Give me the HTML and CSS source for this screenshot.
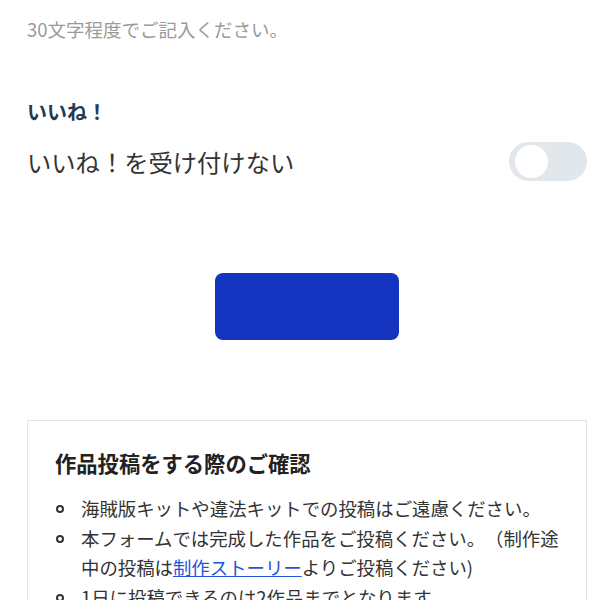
FILE: index.html
```html
<!DOCTYPE html>
<html>
<head>
  <meta charset="utf-8">
  <title>作品投稿</title>
  <link rel="stylesheet" href="styles.css">
</head>
<body>
  <div class="page">
    <p class="hint">30文字程度でご記入ください。</p>

    <div class="field">
      <h3 class="field-label">いいね！</h3>
      <div class="toggle-row">
        <span class="toggle-text">いいね！を受け付けない</span>
        <span class="toggle"><span class="knob"></span></span>
      </div>
    </div>

    <div class="submit-wrap">
      <button class="submit" type="button"></button>
    </div>

    <div class="notice">
      <h2 class="notice-title">作品投稿をする際のご確認</h2>
      <ul class="notice-list">
        <li>海賊版キットや違法キットでの投稿はご遠慮ください。</li>
        <li>本フォームでは完成した作品をご投稿ください。（制作途中の投稿は<a href="#">制作ストーリー</a>よりご投稿ください)</li>
        <li>1日に投稿できるのは2作品までとなります。</li>
        <li>投稿された作品は運営が確認のうえ公開されます。</li>
      </ul>
    </div>
  </div>
</body>
</html>
```

FILE: styles.css
```css
body {
  margin: 0;
  font-family: "Noto Sans CJK JP", "Noto Sans", sans-serif;
  color: #333;
  background: #fff;
  text-spacing-trim: space-all;
}

.page {
  padding: 0 13px 40px 27px;
}

.hint {
  margin: 0;
  padding-top: 16px;
  font-size: 18.5px;
  line-height: 26px;
  color: #9a9a9a;
}

.field {
  margin-top: 57px;
}

.field-label {
  margin: 0;
  font-size: 20px;
  line-height: 26px;
  font-weight: bold;
  color: #243b53;
}

.toggle-row {
  display: flex;
  align-items: center;
  justify-content: space-between;
  margin-top: 17px;
}

.toggle-text {
  font-size: 24.3px;
  line-height: 39px;
  color: #333;
}

.toggle {
  display: flex;
  align-items: center;
  width: 78px;
  height: 39px;
  padding: 0 6px;
  box-sizing: border-box;
  border-radius: 20px;
  background: #e2e7ec;
}

.knob {
  width: 33px;
  height: 33px;
  border-radius: 50%;
  background: #fff;
}

.submit-wrap {
  display: flex;
  justify-content: center;
  margin-top: 92px;
}

.submit {
  width: 184px;
  height: 67px;
  border: none;
  border-radius: 8px;
  background: #1434c0;
  cursor: pointer;
}

.notice {
  margin-top: 80px;
  border: 1px solid #dfe5ea;
  padding: 27px 20px 20px 27px;
}

.notice-title {
  margin: 0;
  font-size: 21.3px;
  line-height: 30px;
  font-weight: bold;
  color: #222;
}

.notice-list {
  margin: 16px 0 0;
  padding-left: 26px;
  list-style: none;
}

.notice-list li {
  position: relative;
  font-size: 18.4px;
  line-height: 29.5px;
  color: #333;
}

.notice-list li::before {
  content: "";
  position: absolute;
  left: -25px;
  top: 11px;
  width: 4px;
  height: 4px;
  border: 2px solid #333;
  border-radius: 50%;
}

.notice-list a {
  color: #1f55d8;
  text-decoration: underline;
}
```
